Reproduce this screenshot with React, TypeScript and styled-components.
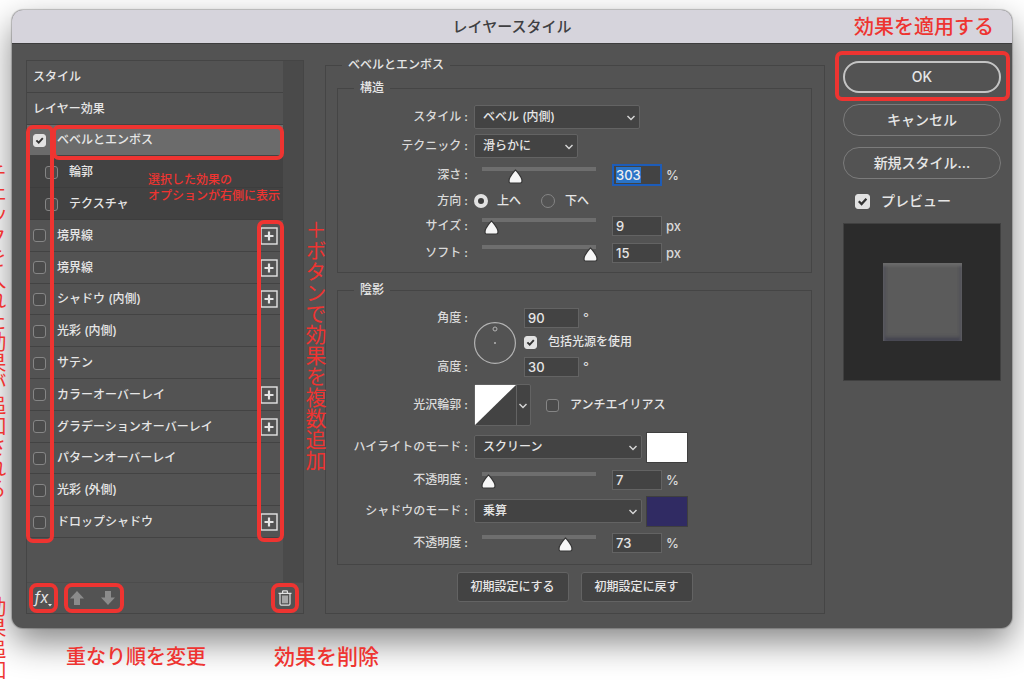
import React, { useEffect, useRef } from "react";
import styled, { createGlobalStyle, css } from "styled-components";

const RED = "#ee3431";
const LINE = "#454545";
const FIELD = "#434343";
const EDGE = "#636363";

const checkMark = `url("data:image/svg+xml,%3Csvg xmlns='http://www.w3.org/2000/svg' viewBox='0 0 14 14'%3E%3Cpath d='M3 6.8 6 9.8 11.2 4' fill='none' stroke='%23333' stroke-width='2.4'/%3E%3C/svg%3E")`;
const thumbShape = `url("data:image/svg+xml,%3Csvg xmlns='http://www.w3.org/2000/svg' viewBox='0 0 15 15'%3E%3Cpath d='M7.5 1 C9 2 11 5 13.2 8.6 Q14 10 14 12 Q14 14 12.4 14 H2.6 Q1 14 1 12 Q1 10 1.8 8.6 C4 5 6 2 7.5 1Z' fill='%23f6f6f6' stroke='%23363636' stroke-width='1.2'/%3E%3C/svg%3E")`;

const GlobalStyle = createGlobalStyle`
  * { box-sizing: border-box; }
  body {
    margin: 0;
    background: #fff;
    font-family: Inter, "Noto Sans CJK JP", sans-serif;
    font-size: 12px;
    font-weight: 500;
    line-height: 18px;
    color: #e6e6e6;
  }
  button, input, select { font: inherit; color: inherit; margin: 0; }
`;

const Page = styled.main`
  position: relative;
  min-height: 100vh;
  overflow: hidden;
  padding: 10px 12px 8px;
`;

const Dialog = styled.section`
  border-radius: 11px;
  background: #535353;
  box-shadow: 0 0 1px 1px rgba(0, 0, 0, 0.22), 0 14px 34px rgba(0, 0, 0, 0.48);
`;

const TitleBar = styled.header`
  height: 34px;
  border-radius: 11px 11px 0 0;
  border-bottom: 1px solid #3d3d3d;
  background: #d6d4dc;
  color: #3f3f42;
  display: grid;
  grid-template-columns: 1fr auto 1fr;
  align-items: center;
  padding: 0 18px;
`;

const Title = styled.h1`
  grid-column: 2;
  margin: 0;
  font-size: 15px;
  font-weight: 500;
  line-height: 20px;
`;

const Note = styled.p<{ $size?: number }>`
  margin: 0;
  color: ${RED};
  font-size: ${(p) => p.$size ?? 20}px;
  line-height: 24px;
  font-weight: 500;
  white-space: nowrap;
`;

const TitleNote = styled(Note)`
  justify-self: end;
`;

const VerticalNote = styled(Note)<{ $left: number; $top: number }>`
  position: absolute;
  left: ${(p) => p.$left}px;
  top: ${(p) => p.$top}px;
  writing-mode: vertical-rl;
  font-weight: 400;
  pointer-events: none;
`;

const Body = styled.div`
  display: flex;
  align-items: stretch;
  padding: 12px 11px 14px 14px;
`;

/* ---------- effect list ---------- */

const ListPanel = styled.nav`
  position: relative;
  flex: 0 0 278px;
  margin-top: 4px;
  border: 1px solid ${LINE};
  display: flex;
  flex-direction: column;
`;

const ListArea = styled.div`
  flex: 1;
  display: flex;
  background: #4a4a4a;
`;

const Effects = styled.ul`
  list-style: none;
  margin: 0;
  padding: 0 0 44px;
  width: 256px;
  height: 521px;
  display: grid;
  grid-template-rows: repeat(15, 1fr);
  background: #535353;
`;

type Kind = "heading" | "active" | "sub" | "plain";

const EffectRow = styled.li<{ $kind: Kind }>`
  display: flex;
  align-items: center;
  justify-content: space-between;
  padding: 1px 5px 0 6px;
  border-bottom: 1px solid #434343;
  ${(p) => p.$kind === "active" && css`background: #6b6b6b;`}
  ${(p) =>
    p.$kind === "sub" &&
    css`
      background: #424242;
      border-color: #3d3d3d;
      padding-left: 18px;
    `}
`;

const CheckLabel = styled.label<{ $gap?: number }>`
  display: flex;
  align-items: center;
  gap: ${(p) => p.$gap ?? 11}px;
  white-space: nowrap;
`;

const Check = styled.input.attrs({ type: "checkbox" })<{ $large?: boolean }>`
  appearance: none;
  flex: none;
  width: ${(p) => (p.$large ? 15 : 13)}px;
  height: ${(p) => (p.$large ? 15 : 13)}px;
  border: 1px solid #858585;
  border-radius: 3px;
  background: #4b4b4b;
  &:checked {
    border-color: #e2e2e2;
    background: #e2e2e2 ${checkMark} center / 100% 100% no-repeat;
  }
`;

const PlusButton = styled.button`
  display: block;
  padding: 0;
  border: 0;
  background: none;
  height: 18px;
`;

const ListFooter = styled.div`
  display: flex;
  align-items: flex-start;
  height: 31px;
  border-top: 1px solid #4c4c4c;
  padding: 0 4px 0 2px;
`;

const Marked = styled.div<{ $width: number }>`
  width: ${(p) => p.$width}px;
  height: 30px;
  border: 4px solid ${RED};
  border-radius: 8px;
  display: flex;
  align-items: center;
  justify-content: center;
  &:nth-child(2) {
    margin-left: 6px;
    padding: 0 5px 0 2px;
    justify-content: space-between;
  }
  &:last-child { margin-left: auto; }
`;

const ToolButton = styled.button`
  border: 0;
  padding: 0;
  background: none;
  display: flex;
  align-items: center;
  font-size: 15px;
  line-height: 20px;
  font-style: italic;
  font-weight: 400;
`;

const Ring = styled.span<{ $inset: string; $radius?: number }>`
  position: absolute;
  inset: ${(p) => p.$inset};
  border: 4px solid ${RED};
  border-radius: ${(p) => p.$radius ?? 7}px;
  pointer-events: none;
`;

const ListNote = styled(Note)`
  position: absolute;
  left: 121px;
  top: 111px;
  line-height: 16px;
`;

/* ---------- option form ---------- */

const Options = styled.fieldset`
  flex: 1;
  min-width: 0;
  margin: 0 18px 0 21px;
  border: 1px solid ${LINE};
  padding: 5px 12px 11px 11px;
`;

const Group = styled.fieldset`
  min-width: 0;
  margin: 0;
  border: 1px solid ${LINE};
  padding: 6px 0 5px;
  & + & { margin-top: 8px; }
`;

const Legend = styled.legend<{ $indent: number }>`
  margin-left: ${(p) => p.$indent}px;
  padding: 0 6px;
  height: 18px;
`;

const Rows = styled.div<{ $rows: string }>`
  display: grid;
  grid-template-columns: 130px 1fr;
  grid-template-rows: ${(p) => p.$rows};
  column-gap: 6px;
  align-items: center;
`;

const LabelText = styled.label`
  grid-column: 1;
  text-align: right;
  white-space: nowrap;
  color: #dadada;
  &::after { content: " :"; white-space: pre; }
`;

const AltitudeLabel = styled(LabelText)`
  grid-row: 3;
`;

const Controls = styled.div<{ $gap?: number }>`
  display: flex;
  align-items: center;
  gap: ${(p) => p.$gap ?? 4}px;
`;

const LightBlock = styled.div`
  grid-column: 2;
  grid-row: 1 / 4;
  display: grid;
  grid-template-columns: 42px auto;
  grid-template-rows: subgrid;
  column-gap: 8px;
  align-items: center;
  justify-content: start;
`;

const Dial = styled.svg`
  grid-row: 1 / 4;
`;

const SelectWrap = styled.span<{ $width: number }>`
  position: relative;
  width: ${(p) => p.$width}px;
  svg {
    position: absolute;
    right: 4px;
    top: 9px;
    pointer-events: none;
  }
`;

const SelectBox = styled.select`
  display: block;
  appearance: none;
  width: 100%;
  height: 24px;
  padding: 0 8px;
  border: 1px solid ${EDGE};
  border-radius: 2px;
  background: ${FIELD};
`;

const Slider = styled.input.attrs({ type: "range" })`
  && { margin: 0 3px 0 -1px; }
  appearance: none;
  width: 132px;
  height: 17px;
  background: linear-gradient(#6e6e6e, #6e6e6e) 9px 0 / 114px 4px no-repeat;
  &::-webkit-slider-runnable-track { height: 17px; }
  &::-webkit-slider-thumb {
    appearance: none;
    width: 15px;
    height: 15px;
    margin-top: 2px;
    background: ${thumbShape} center / 15px 15px no-repeat;
  }
`;

const NumberBox = styled.input.attrs({ type: "text" })<{ $width?: number; $focused?: boolean }>`
  width: ${(p) => p.$width ?? 50}px;
  height: ${(p) => (p.$focused ? 22 : 20)}px;
  padding: 0 3px;
  border: ${(p) => (p.$focused ? "2px solid #1d5cb8" : `1px solid ${EDGE}`)};
  ${(p) => p.$focused && "padding: 0 2px;"}
  background: ${FIELD};
  font-size: 13px;
  outline: none;
  &::selection { background: #2a74c8; color: #f0f0f0; }
`;

const Unit = styled.span`
  font-size: 13px;
  color: #dadada;
`;

const Radio = styled.input.attrs({ type: "radio" })`
  appearance: none;
  width: 14px;
  height: 14px;
  border: 1px solid #858585;
  border-radius: 50%;
  &:checked { border: 4px solid #e2e2e2; background: #3d3d3d; }
`;

const Contour = styled.button`
  && { margin-right: 11px; }
  display: flex;
  align-items: center;
  padding: 0;
  height: 42px;
  width: 57px;
  border: 1px solid ${EDGE};
  border-radius: 2px;
  background: ${FIELD};
`;

const Swatch = styled.button<{ $color: string }>`
  width: 42px;
  height: 31px;
  padding: 0;
  border: 1px solid #3f3f3f;
  background: ${(p) => p.$color};
`;

const FormButtons = styled.div`
  display: flex;
  justify-content: center;
  gap: 12px;
  margin-top: 7px;
`;

const FormButton = styled.button`
  width: 112px;
  height: 30px;
  padding: 0;
  border: 1px solid ${EDGE};
  border-radius: 3px;
  background: ${FIELD};
`;

/* ---------- right column ---------- */

const Actions = styled.aside`
  flex: 0 0 158px;
  display: flex;
  flex-direction: column;
  margin-top: 5px;
  gap: 11px;
  font-size: 14px;
`;

const Anchor = styled.div`
  position: relative;
  display: flex;
`;

const Pill = styled.button<{ $primary?: boolean }>`
  flex: none;
  width: 100%;
  height: 32px;
  border-radius: 16px;
  background: none;
  border: ${(p) => (p.$primary ? "2px solid #c4c4c4" : "1px solid #7b7b7b")};
`;

const PreviewToggle = styled(CheckLabel)`
  padding-left: 12px;
  height: 22px;
`;

const Preview = styled.div`
  aspect-ratio: 1;
  background: #2b2b2b;
  border: 1px solid #404040;
  display: grid;
  place-items: center;
`;

const PreviewShape = styled.div`
  width: 79px;
  height: 78px;
  background: #5b5b5b;
  box-shadow: inset 0 3px 3px #6b6b6b, inset 2px 0 3px #50505a, inset -2px 0 3px #50505a, inset 0 -3px 4px #3d3d4c;
`;

const Captions = styled.div`
  position: relative;
  display: flex;
  align-items: flex-start;
  gap: 68px;
  margin-top: 17px;
  padding-left: 54px;
`;

/* ---------- pieces ---------- */

const Chevron = () => (
  <svg width="10" height="8" viewBox="0 0 10 8" fill="none" stroke="#d6d6d6" strokeWidth="1.4">
    <path d="M1.5 2 5 5.6 8.5 2" />
  </svg>
);

const PlusIcon = () => (
  <svg width="18" height="18" viewBox="0 0 18 18" fill="none" stroke="#e4e4e4">
    <rect x="1" y="1" width="16" height="16" strokeWidth="1.4" />
    <path d="M9 4.5v9M4.5 9h9" strokeWidth="2.2" />
  </svg>
);

const ArrowIcon = ({ down }: { down?: boolean }) => (
  <svg width="14" height="14" viewBox="0 0 14 14" fill="#8b8b8b">
    {down ? <path d="M4 0h6v6.5h4L7 14 0 6.5h4z" /> : <path d="M7 0l7 7.5h-4V14H4V7.5H0z" />}
  </svg>
);

const TrashIcon = () => (
  <svg width="14" height="16" viewBox="0 0 14 16" fill="none" stroke="#e0e0e0" strokeWidth="1.2">
    <path d="M.5 3.3h13M4.6 3V1.4Q4.6.8 5.2.8h3.6q.6 0 .6.6V3M2 3.5v10.2q0 1.5 1.4 1.5h7.2q1.4 0 1.4-1.5V3.5M5 5.5v7.8M7 5.5v7.8M9 5.5v7.8" />
  </svg>
);

const Dropdown = ({ id, value, width }: { id: string; value: string; width: number }) => (
  <SelectWrap $width={width}>
    <SelectBox id={id} defaultValue={value}>
      <option>{value}</option>
    </SelectBox>
    <Chevron />
  </SelectWrap>
);

type AmountProps = { id: string; label: string; value: number; max: number; unit: string; focused?: boolean };

const Amount = ({ id, label, value, max, unit, focused }: AmountProps) => {
  const box = useRef<HTMLInputElement>(null);
  useEffect(() => {
    if (focused) {
      box.current?.focus();
      box.current?.select();
    }
  }, [focused]);
  return (
    <>
      <LabelText htmlFor={id}>{label}</LabelText>
      <Controls>
        <Slider aria-label={label} min={0} max={max} defaultValue={value} />
        <NumberBox id={id} ref={box} $focused={focused} defaultValue={value} />
        <Unit>{unit}</Unit>
      </Controls>
    </>
  );
};

type Effect = { name: string; kind?: Kind; plus?: boolean };

const effects: Effect[] = [
  { name: "スタイル", kind: "heading" },
  { name: "レイヤー効果", kind: "heading" },
  { name: "ベベルとエンボス", kind: "active" },
  { name: "輪郭", kind: "sub" },
  { name: "テクスチャ", kind: "sub" },
  { name: "境界線", plus: true },
  { name: "境界線", plus: true },
  { name: "シャドウ (内側)", plus: true },
  { name: "光彩 (内側)" },
  { name: "サテン" },
  { name: "カラーオーバーレイ", plus: true },
  { name: "グラデーションオーバーレイ", plus: true },
  { name: "パターンオーバーレイ" },
  { name: "光彩 (外側)" },
  { name: "ドロップシャドウ", plus: true },
];

export default function App() {
  return (
    <Page>
      <GlobalStyle />
      <Dialog>
        <TitleBar>
          <Title>レイヤースタイル</Title>
          <TitleNote>効果を適用する</TitleNote>
        </TitleBar>
        <Body>
          <ListPanel>
            <ListArea>
              <Effects>
                {effects.map(({ name, kind = "plain", plus }, i) => (
                  <EffectRow key={i} $kind={kind}>
                    {kind === "heading" ? (
                      <span>{name}</span>
                    ) : (
                      <CheckLabel>
                        <Check defaultChecked={kind === "active"} />
                        {name}
                      </CheckLabel>
                    )}
                    {plus && (
                      <PlusButton aria-label={`${name}を追加`}>
                        <PlusIcon />
                      </PlusButton>
                    )}
                  </EffectRow>
                ))}
              </Effects>
            </ListArea>
            <ListFooter>
              <Marked $width={29}>
                <ToolButton aria-label="効果">
                  fx
                  <svg width="4" height="18" viewBox="0 0 4 18" fill="#e6e6e6">
                    <path d="M0 15h4l-2 2.4z" />
                  </svg>
                </ToolButton>
              </Marked>
              <Marked $width={60}>
                <ToolButton aria-label="上へ移動">
                  <ArrowIcon />
                </ToolButton>
                <ToolButton aria-label="下へ移動">
                  <ArrowIcon down />
                </ToolButton>
              </Marked>
              <Marked $width={28}>
                <ToolButton aria-label="削除">
                  <TrashIcon />
                </ToolButton>
              </Marked>
            </ListFooter>
            <Ring $inset="64px 249px 70px -1px" />
            <Ring $inset="64px 19px 453px 25px" />
            <Ring $inset="159px 19px 71px 230px" />
            <ListNote $size={12}>
              選択した効果の
              <br />
              オプションが右側に表示
            </ListNote>
            <VerticalNote $size={21} $left={275} $top={158}>
              ＋ボタンで効果を複数追加
            </VerticalNote>
          </ListPanel>

          <Options>
            <Legend $indent={5}>ベベルとエンボス</Legend>
            <Group>
              <Legend $indent={16}>構造</Legend>
              <Rows $rows="28px 30px 28px 24px 26px 28px">
                <LabelText htmlFor="style">スタイル</LabelText>
                <Dropdown id="style" value="ベベル (内側)" width={166} />
                <LabelText htmlFor="technique">テクニック</LabelText>
                <Dropdown id="technique" value="滑らかに" width={104} />
                <Amount id="depth" label="深さ" value={303} max={1000} unit="%" focused />
                <LabelText as="span">方向</LabelText>
                <Controls $gap={20}>
                  <CheckLabel $gap={9}>
                    <Radio name="direction" defaultChecked />
                    上へ
                  </CheckLabel>
                  <CheckLabel $gap={10}>
                    <Radio name="direction" />
                    下へ
                  </CheckLabel>
                </Controls>
                <Amount id="size" label="サイズ" value={9} max={100} unit="px" />
                <Amount id="soften" label="ソフト" value={15} max={16} unit="px" />
              </Rows>
            </Group>

            <Group>
              <Legend $indent={16}>陰影</Legend>
              <Rows $rows="26px 22px 28px">
                <LabelText htmlFor="angle">角度</LabelText>
                <LightBlock>
                  <Dial width="42" height="44" viewBox="0 0 42 44" fill="none" stroke="#b4b4b4">
                    <circle cx="21" cy="22" r="20.4" strokeWidth="1.2" />
                    <circle cx="21" cy="8" r="2" />
                    <circle cx="21" cy="22" r="1" fill="#b4b4b4" stroke="none" />
                  </Dial>
                  <Controls>
                    <NumberBox id="angle" $width={55} defaultValue="90" />
                    <Unit>°</Unit>
                  </Controls>
                  <CheckLabel>
                    <Check defaultChecked />
                    包括光源を使用
                  </CheckLabel>
                  <Controls>
                    <NumberBox id="altitude" $width={55} defaultValue="30" />
                    <Unit>°</Unit>
                  </Controls>
                </LightBlock>
                <AltitudeLabel htmlFor="altitude">高度</AltitudeLabel>
              </Rows>
              <Rows $rows="48px 36px 30px 32px 32px">
                <LabelText htmlFor="contour">光沢輪郭</LabelText>
                <Controls>
                  <Contour id="contour">
                    <svg width="55" height="40" viewBox="0 0 55 40" fill="none">
                      <path d="M0 0H41L0 40Z" fill="#fff" />
                      <path d="M41.5 0V40" stroke="#636363" />
                      <path d="M44.5 19 48 22.6 51.5 19" stroke="#d6d6d6" strokeWidth="1.4" />
                    </svg>
                  </Contour>
                  <CheckLabel>
                    <Check />
                    アンチエイリアス
                  </CheckLabel>
                </Controls>
                <LabelText htmlFor="highlight">ハイライトのモード</LabelText>
                <Controls>
                  <Dropdown id="highlight" value="スクリーン" width={168} />
                  <Swatch $color="#ffffff" aria-label="ハイライトのカラー" />
                </Controls>
                <Amount id="highlight-opacity" label="不透明度" value={7} max={100} unit="%" />
                <LabelText htmlFor="shadow">シャドウのモード</LabelText>
                <Controls>
                  <Dropdown id="shadow" value="乗算" width={168} />
                  <Swatch $color="#302b63" aria-label="シャドウのカラー" />
                </Controls>
                <Amount id="shadow-opacity" label="不透明度" value={73} max={100} unit="%" />
              </Rows>
            </Group>
            <FormButtons>
              <FormButton>初期設定にする</FormButton>
              <FormButton>初期設定に戻す</FormButton>
            </FormButtons>
          </Options>

          <Actions>
            <Anchor>
              <Pill $primary>OK</Pill>
              <Ring $inset="-10px -9px -8px -8px" />
            </Anchor>
            <Pill>キャンセル</Pill>
            <Pill>新規スタイル...</Pill>
            <PreviewToggle>
              <Check $large defaultChecked />
              プレビュー
            </PreviewToggle>
            <Preview>
              <PreviewShape />
            </Preview>
          </Actions>
        </Body>
      </Dialog>
      <Captions>
        <Note>重なり順を変更</Note>
        <Note $size={21}>効果を削除</Note>
      </Captions>
      <VerticalNote $size={21} $left={-18} $top={163}>
        チェックを入れた効果が追加される
      </VerticalNote>
      <VerticalNote $size={21} $left={-18} $top={596}>
        効果追加
      </VerticalNote>
    </Page>
  );
}
